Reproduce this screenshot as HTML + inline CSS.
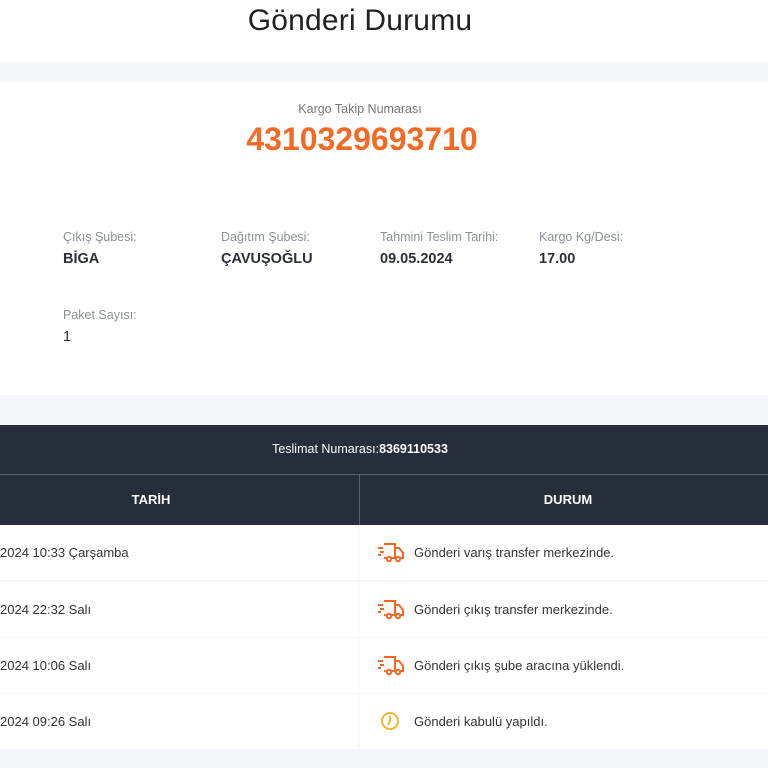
<!DOCTYPE html><html><head><meta charset="utf-8"><style>
body{margin:0;width:768px;height:768px;overflow:hidden;background:#f4f6f9;font-family:"Liberation Sans",sans-serif;position:relative}
.a{position:absolute}
.lab{font-size:12.5px;color:#8a8f98}
.val{font-size:14.5px;color:#2a2f38;font-weight:bold}
.row{position:absolute;left:0;width:768px;height:55px;background:#fbfbfc}
.row .l{position:absolute;left:0;top:0;width:357px;height:55px;background:#fff;font-size:13px;color:#333;line-height:55px}
.row .r{position:absolute;left:360px;top:0;width:408px;height:55px;background:#fff;font-size:13px;color:#333;line-height:55px}
.row .r span{position:absolute;left:54px}
.row svg{position:absolute;left:17px;top:17px}
</style></head><body>
<div class="a" style="left:0;top:0;width:768px;height:62px;background:#fff"></div>
<div class="a" style="left:0;top:4px;width:720px;text-align:center;font-size:30px;color:#222;letter-spacing:0.2px">Gönderi Durumu</div>
<div class="a" style="left:0;top:82px;width:768px;height:313px;background:#fff"></div>
<div class="a lab" style="left:0;top:102px;width:720px;text-align:center;color:#777">Kargo Takip Numarası</div>
<div class="a" style="left:0;top:121px;width:724px;text-align:center;font-size:32px;font-weight:bold;color:#f26a25">4310329693710</div>
<div class="a lab" style="left:63px;top:230px">Çıkış Şubesi:</div><div class="a val" style="left:63px;top:251px">BİGA</div>
<div class="a lab" style="left:221px;top:230px">Dağıtım Şubesi:</div><div class="a val" style="left:221px;top:251px">ÇAVUŞOĞLU</div>
<div class="a lab" style="left:380px;top:230px">Tahmini Teslim Tarihi:</div><div class="a val" style="left:380px;top:251px">09.05.2024</div>
<div class="a lab" style="left:539px;top:230px">Kargo Kg/Desi:</div><div class="a val" style="left:539px;top:251px">17.00</div>
<div class="a lab" style="left:63px;top:308px">Paket Sayısı:</div><div class="a val" style="left:63px;top:329px;font-weight:normal">1</div>
<div class="a" style="left:0;top:425px;width:768px;height:100px;background:#262d3b"></div>
<div class="a" style="left:0;top:474px;width:768px;height:1px;background:#5a6170"></div>
<div class="a" style="left:359px;top:475px;width:1px;height:50px;background:#5a6170"></div>
<div class="a" style="left:0;top:442px;width:720px;text-align:center;color:#fff;font-size:12.5px">Teslimat Numarası:<b>8369110533</b></div>
<div class="a" style="left:0;top:492px;width:302px;text-align:center;color:#fff;font-size:13px;font-weight:bold">TARİH</div>
<div class="a" style="left:360px;top:492px;width:416px;text-align:center;color:#fff;font-size:13px;font-weight:bold">DURUM</div>
<div class="row" style="top:525px"><div class="l">2024 10:33 Çarşamba</div><div class="r"><svg width="28" height="22" viewBox="0 0 28 22" fill="none" stroke="#f26a25" stroke-width="2"><path d="M7 2h11v14M18 6h4l4 5v5h-3M7 16h3M14 16h4M1 6h5M3 10h4M1 13h3"/><circle cx="12" cy="17" r="2.2"/><circle cx="21" cy="17" r="2.2"/></svg><span>Gönderi varış transfer merkezinde.</span></div></div>
<div class="row" style="top:582px"><div class="l">2024 22:32 Salı</div><div class="r"><svg width="28" height="22" viewBox="0 0 28 22" fill="none" stroke="#f26a25" stroke-width="2"><path d="M7 2h11v14M18 6h4l4 5v5h-3M7 16h3M14 16h4M1 6h5M3 10h4M1 13h3"/><circle cx="12" cy="17" r="2.2"/><circle cx="21" cy="17" r="2.2"/></svg><span>Gönderi çıkış transfer merkezinde.</span></div></div>
<div class="row" style="top:638px"><div class="l">2024 10:06 Salı</div><div class="r"><svg width="28" height="22" viewBox="0 0 28 22" fill="none" stroke="#f26a25" stroke-width="2"><path d="M7 2h11v14M18 6h4l4 5v5h-3M7 16h3M14 16h4M1 6h5M3 10h4M1 13h3"/><circle cx="12" cy="17" r="2.2"/><circle cx="21" cy="17" r="2.2"/></svg><span>Gönderi çıkış şube aracına yüklendi.</span></div></div>
<div class="row" style="top:694px"><div class="l">2024 09:26 Salı</div><div class="r"><svg width="28" height="22" viewBox="0 0 28 22" fill="none" stroke="#f5b52a" stroke-width="2"><circle cx="13" cy="10" r="8"/><path d="M13 5v5l-2 4"/></svg><span>Gönderi kabulü yapıldı.</span></div></div>
</body></html>
